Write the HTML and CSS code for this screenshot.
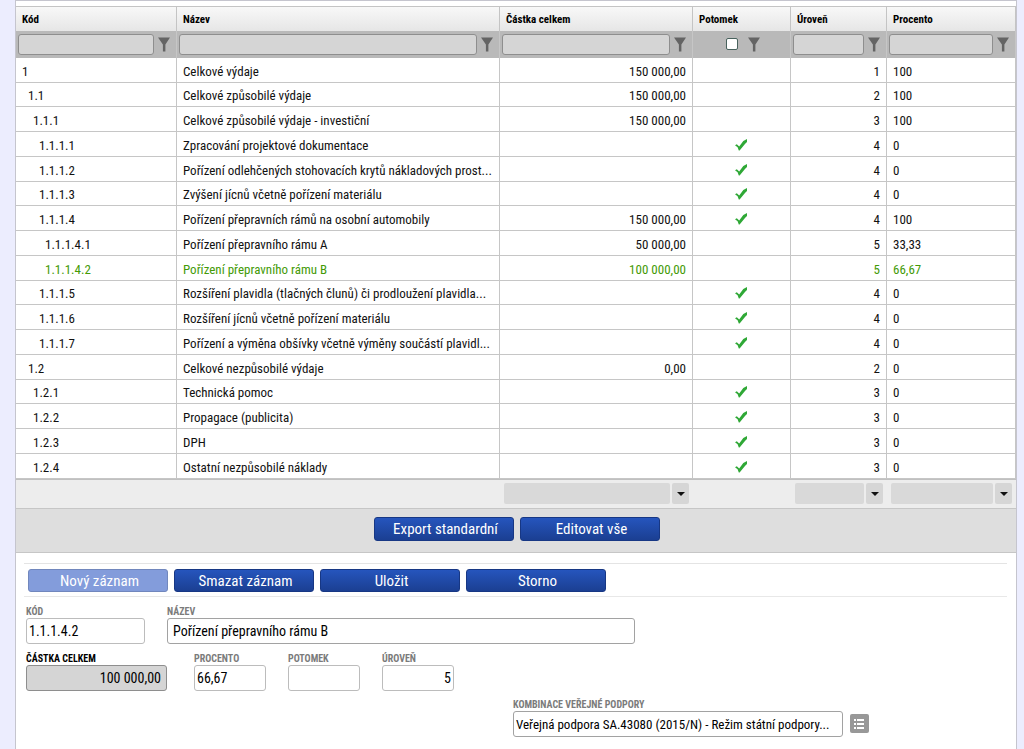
FILE: index.html
```html
<!DOCTYPE html>
<html lang="cs">
<head>
<meta charset="utf-8">
<title>Rozpočet</title>
<link rel="stylesheet" href="styles.css">
</head>
<body>
<svg class="sprite" aria-hidden="true">
  <symbol id="funnel" viewBox="0 0 12 15"><path d="M0 0.5H12L7.4 7.5V14.5H4.9V7.5Z"/></symbol>
  <symbol id="tick" viewBox="0 0 12 12"><path d="M0 6.2L1.8 5.3L4.2 7.6L8.3 2.1L12 0V3L10.2 4.8L4.6 11.5H3.8L2.6 8.3Z"/></symbol>
</svg>
<main class="panel">
  <table class="grid">
    <colgroup><col class="c-code"><col class="c-name"><col class="c-sum"><col class="c-child"><col class="c-level"><col class="c-pct"></colgroup>
    <thead>
      <tr class="heads"><th>Kód</th><th>Název</th><th>Částka celkem</th><th>Potomek</th><th>Úroveň</th><th>Procento</th></tr>
      <tr class="filters">
        <td><div class="filter"><input type="text" aria-label="Filtr Kód"><button aria-label="Filtrovat Kód"><svg><use href="#funnel"/></svg></button></div></td>
        <td><div class="filter"><input type="text" aria-label="Filtr Název"><button aria-label="Filtrovat Název"><svg><use href="#funnel"/></svg></button></div></td>
        <td><div class="filter"><input type="text" aria-label="Filtr Částka celkem"><button aria-label="Filtrovat Částka celkem"><svg><use href="#funnel"/></svg></button></div></td>
        <td><div class="filter center"><input type="checkbox" aria-label="Filtr Potomek"><button aria-label="Filtrovat Potomek"><svg><use href="#funnel"/></svg></button></div></td>
        <td><div class="filter"><input type="text" aria-label="Filtr Úroveň"><button aria-label="Filtrovat Úroveň"><svg><use href="#funnel"/></svg></button></div></td>
        <td><div class="filter"><input type="text" aria-label="Filtr Procento"><button aria-label="Filtrovat Procento"><svg><use href="#funnel"/></svg></button></div></td>
      </tr>
    </thead>
    <tbody>
      <tr><td>1</td><td>Celkové výdaje</td><td class="num">150 000,00</td><td></td><td class="num">1</td><td>100</td></tr>
      <tr><td class="l2">1.1</td><td>Celkové způsobilé výdaje</td><td class="num">150 000,00</td><td></td><td class="num">2</td><td>100</td></tr>
      <tr><td class="l3">1.1.1</td><td>Celkové způsobilé výdaje - investiční</td><td class="num">150 000,00</td><td></td><td class="num">3</td><td>100</td></tr>
      <tr><td class="l4">1.1.1.1</td><td>Zpracování projektové dokumentace</td><td></td><td class="mark"><svg><use href="#tick"/></svg></td><td class="num">4</td><td>0</td></tr>
      <tr><td class="l4">1.1.1.2</td><td>Pořízení odlehčených stohovacích krytů nákladových prost...</td><td></td><td class="mark"><svg><use href="#tick"/></svg></td><td class="num">4</td><td>0</td></tr>
      <tr><td class="l4">1.1.1.3</td><td>Zvýšení jícnů včetně pořízení materiálu</td><td></td><td class="mark"><svg><use href="#tick"/></svg></td><td class="num">4</td><td>0</td></tr>
      <tr><td class="l4">1.1.1.4</td><td>Pořízení přepravních rámů na osobní automobily</td><td class="num">150 000,00</td><td class="mark"><svg><use href="#tick"/></svg></td><td class="num">4</td><td>100</td></tr>
      <tr><td class="l5">1.1.1.4.1</td><td>Pořízení přepravního rámu A</td><td class="num">50 000,00</td><td></td><td class="num">5</td><td>33,33</td></tr>
      <tr class="selected"><td class="l5">1.1.1.4.2</td><td>Pořízení přepravního rámu B</td><td class="num">100 000,00</td><td></td><td class="num">5</td><td>66,67</td></tr>
      <tr><td class="l4">1.1.1.5</td><td>Rozšíření plavidla (tlačných člunů) či prodloužení plavidla...</td><td></td><td class="mark"><svg><use href="#tick"/></svg></td><td class="num">4</td><td>0</td></tr>
      <tr><td class="l4">1.1.1.6</td><td>Rozšíření jícnů včetně pořízení materiálu</td><td></td><td class="mark"><svg><use href="#tick"/></svg></td><td class="num">4</td><td>0</td></tr>
      <tr><td class="l4">1.1.1.7</td><td>Pořízení a výměna obšívky včetně výměny součástí plavidl...</td><td></td><td class="mark"><svg><use href="#tick"/></svg></td><td class="num">4</td><td>0</td></tr>
      <tr><td class="l2">1.2</td><td>Celkové nezpůsobilé výdaje</td><td class="num">0,00</td><td></td><td class="num">2</td><td>0</td></tr>
      <tr><td class="l3">1.2.1</td><td>Technická pomoc</td><td></td><td class="mark"><svg><use href="#tick"/></svg></td><td class="num">3</td><td>0</td></tr>
      <tr><td class="l3">1.2.2</td><td>Propagace (publicita)</td><td></td><td class="mark"><svg><use href="#tick"/></svg></td><td class="num">3</td><td>0</td></tr>
      <tr><td class="l3">1.2.3</td><td>DPH</td><td></td><td class="mark"><svg><use href="#tick"/></svg></td><td class="num">3</td><td>0</td></tr>
      <tr><td class="l3">1.2.4</td><td>Ostatní nezpůsobilé náklady</td><td></td><td class="mark"><svg><use href="#tick"/></svg></td><td class="num">3</td><td>0</td></tr>
    </tbody>
    <tfoot>
      <tr>
        <td></td><td></td>
        <td><div class="total"><output></output><button aria-label="Souhrn Částka celkem"><span class="caret"></span></button></div></td>
        <td></td>
        <td><div class="total"><output></output><button aria-label="Souhrn Úroveň"><span class="caret"></span></button></div></td>
        <td><div class="total"><output></output><button aria-label="Souhrn Procento"><span class="caret"></span></button></div></td>
      </tr>
    </tfoot>
  </table>
  <div class="toolbar">
    <button class="btn">Export standardní</button>
    <button class="btn">Editovat vše</button>
  </div>
  <form class="detail">
    <div class="actions">
      <button type="button" class="btn" disabled>Nový záznam</button>
      <button type="button" class="btn">Smazat záznam</button>
      <button type="button" class="btn">Uložit</button>
      <button type="button" class="btn">Storno</button>
    </div>
    <div class="fields first">
      <div class="field code"><label for="kod">KÓD</label><input id="kod" type="text" value="1.1.1.4.2" readonly></div>
      <div class="field name"><label for="nazev">NÁZEV</label><input id="nazev" type="text" value="Pořízení přepravního rámu B"></div>
    </div>
    <div class="fields second">
      <div class="field sum"><label for="castka">ČÁSTKA CELKEM</label><input id="castka" type="text" value="100 000,00"></div>
      <div class="field small"><label for="procento">PROCENTO</label><input id="procento" type="text" value="66,67" readonly></div>
      <div class="field small"><label for="potomek">POTOMEK</label><input id="potomek" type="text" readonly></div>
      <div class="field small level"><label for="uroven">ÚROVEŇ</label><input id="uroven" type="text" value="5" readonly></div>
    </div>
    <div class="fields support">
      <div class="field aid"><label for="podpora">KOMBINACE VEŘEJNÉ PODPORY</label><input id="podpora" type="text" value="Veřejná podpora SA.43080 (2015/N) - Režim státní podpory..."></div>
      <button type="button" class="picker" aria-label="Vybrat ze seznamu"><svg viewBox="0 0 19 19"><path d="M4 5H6V7H4ZM7 5H14V7H7ZM4 9H6V11H4ZM7 9H14V11H7ZM4 13H6V15H4ZM7 13H14V15H7Z"/></svg></button>
    </div>
  </form>
</main>
</body>
</html>
```
FILE: styles.css
```css
* { box-sizing: border-box; }
body {
  margin: 0;
  background: #ecedfe;
  font-family: "Roboto Condensed", "Liberation Sans Narrow", Roboto, sans-serif;
  font-size: 13px;
  color: #111;
}
button, input { font: inherit; color: inherit; margin: 0; padding: 0; }
button { border: 0; background: none; }
.sprite { position: absolute; width: 0; height: 0; }
.panel {
  margin: 0 7px 0 15px;
  min-height: 100vh;
  background: #fff;
  border: 1px solid #c5c5ce;
  border-bottom: 0;
}
.grid {
  width: 100%;
  margin-top: 5px;
  table-layout: fixed;
  border-collapse: separate;
  border-spacing: 0;
  border-top: 1px solid #c4c4c4;
}
.c-code { width: 16.1%; }
.c-name { width: 32.3%; }
.c-sum { width: 19.3%; }
.c-child { width: 9.8%; }
.c-level { width: 9.6%; }
.c-pct { width: 12.9%; }
.grid th {
  height: 24px;
  padding: 2px 6px 0;
  text-align: left;
  font-size: 11px;
  line-height: 16px;
  color: #000;
  background: linear-gradient(#f8f8f8, #e6e6e6);
  border-right: 1px solid #c4c4c4;
}
.filters td {
  height: 27px;
  padding: 0 6px 1px 2px;
  background: #b9b9b9;
  border-right: 1px solid #c6c6c6;
}
.filter { display: flex; align-items: center; gap: 4px; }
.filter input[type="text"] {
  flex: 1;
  min-width: 0;
  height: 21px;
  border: 1px solid #8e8e8e;
  border-radius: 3px;
  background: #d5d5d5;
}
.filter.center { justify-content: center; gap: 10px; padding-left: 7px; }
.filter input[type="checkbox"] {
  appearance: none;
  width: 12px;
  height: 12px;
  background: #fff;
  border: 1px solid #48625d;
  border-radius: 2px;
}
.filter button { display: flex; }
.filter svg { width: 12px; height: 15px; fill: #646464; }
.grid tbody td {
  height: 25px;
  padding: 3px 6px 0;
  line-height: 18px;
  white-space: nowrap;
  overflow: hidden;
  border-right: 1px solid #c6c6c6;
  border-bottom: 1px solid #c6c6c6;
}
.grid tbody tr:nth-child(4n+2) td { height: 24px; }
.grid tbody .l2 { padding-left: 12px; }
.grid tbody .l3 { padding-left: 17px; }
.grid tbody .l4 { padding-left: 23px; }
.grid tbody .l5 { padding-left: 29px; }
.grid .num { text-align: right; }
.grid tbody .mark { padding: 1px 2px 0 0; text-align: center; }
.mark svg { display: block; width: 12px; height: 12px; margin: 0 auto; fill: #2fa836; }
.grid .selected { color: #439a06; }
.grid tfoot td {
  height: 29px;
  padding: 0 4px 1px;
  background: #ededed;
  border-top: 1px solid #c0c0c0;
}
.total { display: flex; gap: 2px; }
.total output { flex: 1; height: 21px; background: #d9d9d9; border-radius: 2px; }
.total button {
  display: flex;
  align-items: center;
  justify-content: center;
  width: 17px;
  height: 21px;
  background: #d6d6d6;
  border-radius: 2px;
}
.caret { border: 4px solid transparent; border-top: 4px solid #111; border-bottom: 0; }
.toolbar {
  display: flex;
  justify-content: center;
  gap: 6px;
  height: 45px;
  padding: 8px 0 8px 2px;
  background: #dedede;
  border-top: 1px solid #c6c6c6;
  border-bottom: 1px solid #c6c6c6;
}
.btn {
  width: 140px;
  height: 24px;
  padding: 0 0 0 3px;
  border: 1px solid #173784;
  border-radius: 3px;
  background: linear-gradient(#2655bd, #1b3f92);
  color: #fff;
  font-size: 15px;
  line-height: 20px;
}
.btn:disabled { background: #839cdb; border-color: #7187bd; }
.detail { padding: 10px 9px 10px 8px; }
.actions {
  display: flex;
  gap: 6px;
  padding: 5px 4px 4px;
  border-top: 1px solid #e4e4e4;
  border-bottom: 1px solid #e8e8e8;
}
.actions .btn { height: 23px; }
.fields { display: flex; align-items: flex-end; padding-left: 2px; }
.first { gap: 22px; margin-top: 9px; }
.second { gap: 22px; margin-top: 9px; }
.support { gap: 7px; margin-top: 8px; justify-content: flex-end; padding-right: 138px; }
.field { display: flex; flex-direction: column; }
.field label { font-size: 10px; line-height: 12px; font-weight: 700; color: #7b7b7b; white-space: nowrap; }
.field input {
  width: 100%;
  height: 26px;
  padding: 0 2px;
  border: 1px solid #bcbcbc;
  border-radius: 3px;
  background: #fff;
  color: #000;
  font-size: 14px;
}
.code { width: 119px; }
.name { width: 468px; }
.name input { padding: 0 5px; border-color: #a2a2a2; }
.sum { width: 141px; margin-right: 5px; }
.sum label { color: #000; }
.sum input { padding: 0 5px; background: #d5d5d5; border-color: #8e8e8e; text-align: right; }
.small { width: 72px; }
.level input { text-align: right; }
.aid { width: 330px; }
.aid input { border-color: #a2a2a2; font-size: 13px; }
.picker { width: 19px; height: 19px; margin-bottom: 4px; background: #989898; border-radius: 2px; }
.picker svg { display: block; width: 19px; height: 19px; fill: #fff; }
```
